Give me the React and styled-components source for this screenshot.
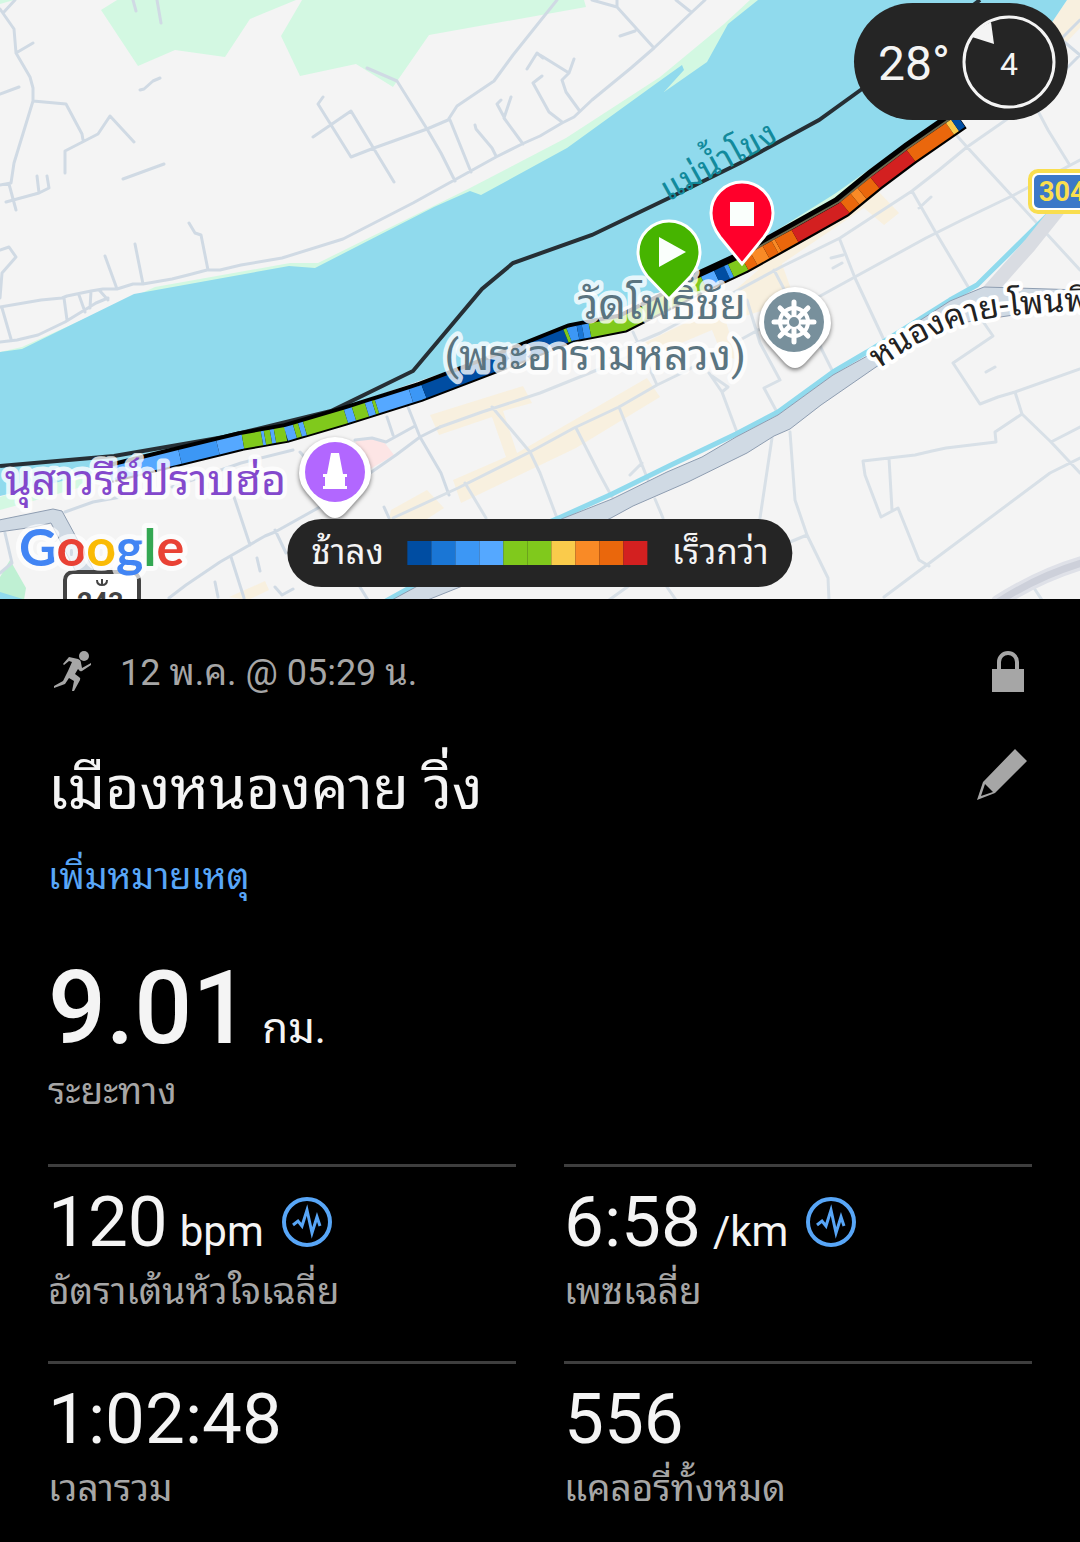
import styled, { createGlobalStyle } from "styled-components";

function App() {
    return (
        <>
            <GlobalStyle />
            <Page>
                <MapSection>
                    <RouteMap />
                    <Weather>
                        <Temperature>28°</Temperature>
                        <Wind>
                            <svg viewBox="0 0 94 94" aria-hidden="true">
                                <circle cx="47" cy="47" r="45" fill="none" stroke="#f4f4f4" strokeWidth="3" />
                                <path d="M10 22 Q17 12 29 7 L32 29Z" fill="#f4f4f4" />
                            </svg>
                            <WindSpeed>4</WindSpeed>
                        </Wind>
                    </Weather>
                    <Legend>
                        <span>ช้าลง</span>
                        <Scale>
                            {scaleColors.map((color, i) => (
                                <ScaleStep key={i} $color={color} />
                            ))}
                        </Scale>
                        <span>เร็วกว่า</span>
                    </Legend>
                </MapSection>

                <Details>
                    <DateRow>
                        <RunIcon />
                        <DateText>12 พ.ค. @ 05:29 น.</DateText>
                        <IconButton aria-label="ความเป็นส่วนตัว">
                            <LockIcon />
                        </IconButton>
                    </DateRow>
                    <TitleRow>
                        <Title>เมืองหนองคาย วิ่ง</Title>
                        <IconButton aria-label="แก้ไข">
                            <PencilIcon />
                        </IconButton>
                    </TitleRow>
                    <NoteLink href="#note">เพิ่มหมายเหตุ</NoteLink>

                    <Distance>
                        <DistanceValue>9.01</DistanceValue>
                        <Unit>กม.</Unit>
                    </Distance>
                    <Label>ระยะทาง</Label>

                    <Stats>
                        {stats.map((stat) => (
                            <Stat key={stat.label}>
                                <StatLine>
                                    <StatValue>{stat.value}</StatValue>
                                    {stat.unit && <Unit>{stat.unit}</Unit>}
                                    {stat.chart && (
                                        <ChartButton aria-label={stat.label}>
                                            <PulseIcon />
                                        </ChartButton>
                                    )}
                                </StatLine>
                                <Label>{stat.label}</Label>
                            </Stat>
                        ))}
                    </Stats>
                </Details>
            </Page>
        </>
    );
}

export default App;

const stats = [
    { value: "120", unit: "bpm", label: "อัตราเต้นหัวใจเฉลี่ย", chart: true },
    { value: "6:58", unit: "/km", label: "เพซเฉลี่ย", chart: true },
    { value: "1:02:48", label: "เวลารวม" },
    { value: "556", label: "แคลอรี่ทั้งหมด" },
];

const navy = "#004da2";
const blue = "#1a76d5";
const azure = "#3c97f5";
const sky = "#55a8ff";
const green = "#80c91c";
const yellow = "#facb4b";
const amber = "#f98a26";
const orange = "#ea670c";
const red = "#d32020";

const scaleColors = [navy, blue, azure, sky, green, green, yellow, amber, orange, red];

// centre line of the run
const track = [
    [110, 474], [155, 463], [241, 442], [286, 434], [344, 417], [420, 393], [496, 364], [571, 334],
    [623, 324], [698, 286], [743, 265], [795, 236], [843, 209], [876, 182], [912, 155], [961, 121],
];

// where each pace band ends, going east from x = 110
const paceBands = [
    [180, sky], [218, azure], [243, sky], [262, green], [265, sky], [271, green], [275, sky], [286, green],
    [295, sky], [300, green], [305, sky], [346, green], [354, sky], [367, green], [374, sky], [377, green],
    [411, sky], [424, azure], [566, navy], [569, green], [578, azure], [583, blue], [590, azure],
    [704, green], [717, sky], [727, navy], [731, azure], [745, green], [754, orange], [766, amber],
    [775, orange], [778, amber], [795, orange], [845, red], [855, orange], [862, amber], [875, orange],
    [911, red], [950, orange], [955, yellow], [961, navy],
];

function trackY(x) {
    const i = Math.max(1, track.findIndex((p) => p[0] >= x));
    const [x1, y1] = track[i - 1];
    const [x2, y2] = track[i];
    return y1 + ((x - x1) / (x2 - x1)) * (y2 - y1);
}

function bandPoints(from, to) {
    const inner = track.filter((p) => p[0] > from && p[0] < to);
    return [[from, trackY(from)], ...inner, [to, trackY(to)]].join(" ");
}

const trackBands = paceBands.map(([end, color], i) => {
    const start = i ? paceBands[i - 1][0] : 110;
    return { color, points: bandPoints(start, end) };
});

const roads = `
M15 0 L3 13 M0 9 L14 29 L16 53 L30 77 L33 88 V101 L14 163 L11 183 L0 185 M16 53 L33 43 M0 94 L19 87
M33 101 L66 104 L82 134 L83 140 M65 173 V151 L98 134 L110 116 L134 142 M140 90 L144 89 L153 81 L160 78
M123 179 L164 164 M9 184 L16 210 M6 202 L39 193 L49 188 L47 176 M37 176 L39 193 M133 0 L136 11 M157 0 L161 23
M0 250 L9 247 L16 257 L2 273 L0 298 M105 256 L117 289 M135 244 L143 284 M189 223 L195 233 L201 235 L208 270
M0 342 L17 340 L38 335 L65 322 L96 303 L108 298 M0 307 L41 300 L62 298 L67 296 L91 291 L103 289 H117 L133 284
H143 L172 279 L188 275 L207 270 H220 L241 265 L282 258 L343 239 L413 203 L496 157 L522 144 L540 136 L562 123
L574 117 L592 100 L631 68 L654 48 L691 13 L705 0 M2 308 L11 339 M64 298 L67 320 M79 295 L85 312 M91 291 L90 308
M100 291 L108 300 M323 97 L318 104 L351 157 L374 148 L427 129 L448 120 L457 106 L494 81 L513 55 L557 0
M313 137 L351 111 L394 182 M367 68 L397 81 L427 129 L441 153 L455 181 M450 120 L471 172
M475 125 L476 129 L492 148 L496 156 M511 97 L504 118 L523 144 M501 100 L497 104 L504 117 M527 69 L537 53 L543 58
M542 76 L533 83 L549 112 L562 122 M540 55 L569 73 L574 59 M569 73 L562 80 L566 92 L579 110
M592 0 L617 7 L654 48 M617 0 V7 M620 36 L635 31 M676 0 L691 12
M5 533 L12 563 L0 573 M65 512 L93 502 L121 497 M172 487 L241 463 L293 450 M234 497 L250 545
M169 598 L186 585 L220 562 L265 536 L275 532 L327 503 L396 455 L420 437 L440 427 M231 557 L244 598
M275 530 L286 553 M257 558 L260 571 M215 582 L218 597 M275 587 L282 595 L293 589 M384 507 L389 518
M408 407 L420 437 L441 473 L449 495 M387 417 L393 435 M355 440 L372 438 L386 442 L415 426 M300 452 L312 465
M1080 20 L1030 70 M1062 40 L1080 55 L1060 75 M360 587 L368 600`;

const paleRoads = `
M440 427 L482 412 L540 393 L602 368 L650 347 M492 407 L530 452 L540 473 L557 518 M465 483 L486 518 M393 518 L458 488 L530 452 L574 428
L619 407 L657 385 L688 370 L712 355 M576 428 L599 473 L612 497 M619 407 L648 480 M642 463 L630 475 M633 332 L657 385
M620 350 L660 333 L720 300 L781 267 L840 238 L912 191 L939 170 L967 147 L1003 122 L1020 110
M1039 113 L1048 130 L1069 164 M950 128 L967 147 L1012 196 L1080 270 M1080 160 L1012 196 L964 219 L926 238 L853 278 L740 340
M912 191 L936 233 L970 290 M840 240 L855 278 L884 340 M919 208 L931 197 M831 258 L843 255 M833 268 L842 263
M774 270 L795 310 M747 300 L760 343 L780 380 L764 388 L778 414 M709 373 L722 392 L738 435 M722 392 L728 387 L712 376
M816 335 L822 350 L834 374 M984 323 L993 336 L953 363 L980 404 L998 397 L1015 392 L1080 369
M1015 392 L1022 414 L1051 442 L1080 473 M1022 414 L995 432 L996 442 L946 448 L932 451 L915 455 L863 461 L865 475 L881 517
L898 508 L919 560 L929 566 M889 458 L892 510 M1051 442 L1080 427 M1080 458 L1050 473 L884 597 M986 372 L995 367
M790 432 L795 500 L807 535 L828 578 L829 600 M807 535 L790 542 M772 438 L760 518 M655 499 L663 518
M667 587 L676 600 M609 600 L630 585 M1032 585 L1042 600`;

function RouteMap() {
    return (
        <MapDrawing viewBox="0 0 1080 599" role="img" aria-label="แผนที่เส้นทาง">
            <rect width="1080" height="599" fill="#f4f4f4" />
            <g fill="#d3f8e2">
                <path d="M101 10 L117 0 H296 L250 19 L225 57 L175 50 L138 66Z" />
                <path d="M302 0 L281 36 L300 76 L356 64 L393 87 L429 35 L586 7 L584 0Z" />
                <path d="M0 0 H14 L0 4Z" />
                <path d="M0 352 L22 347 L155 287 L290 263 H318 L470 188 L566 138 L660 77 L724 24 L750 0 H770 V200 L0 480Z" />
                <path d="M700 276 L830 190 L946 118 L960 122 L800 230Z" />
                <path d="M0 497 L40 484 L130 473 L40 499 L0 510Z" />
            </g>
            <path d="M0 577 L10 560 L26 588 L24 600 H0Z" fill="#bff0d3" />
            <path d="M0 592 L26 600 H0Z" fill="#90daed" />
            <g fill="#f8f0df">
                <path d="M430 415 L523 386 L532 403 L503 411 L517 453 L647 378 L660 397 L576 448 L461 503 L453 480 L506 457 L492 417 L439 435Z" />
                <path d="M391 510 L427 490 L444 508 L427 519 H389Z M229 597 L265 581 L269 590 L248 600Z" />
                <path d="M640 345 L712 310 L778 253 L795 300 L780 305 L726 322 L738 360 L722 355 L712 330 L660 352Z" />
                <path d="M700 283 L800 226 L912 146 L857 203 L877 190 L899 213 L884 225 L864 208 L780 265Z" />
                <path d="M1067 0 H1080 V28 L1040 70 H1020Z" />
            </g>
            <path d="M355 440 L372 438 L384 442 L394 455 L365 472Z" fill="#fde5e5" />
            <path
                d="M0 352 L22 349 L134 294 L289 266 L315 268 L434 207 L470 191 L481 195 L567 148 L661 80 L682 65 L684 70 L664 92 L707 62 L728 24 L758 0 H1067 L1020 70 L884 159 L836 193 L774 232 L705 273 L570 330 L425 379 L330 412 L230 440 L150 458 L100 472 L0 496Z"
                fill="#90daed"
            />
            <g fill="none" strokeLinejoin="round" strokeLinecap="round">
                <path d={roads} stroke="#d0dae4" strokeWidth="3" />
                <path d={paleRoads} stroke="#d8e0e7" strokeWidth="3" />
                <path d="M1052 211 L977 285 L950 300 L867 352 L833 372 L778 412 L736 434 L671 465 L612 494 L561 517 L460 560 L386 601" stroke="#90daed" strokeWidth="5" />
                <path d="M1062 205 L1030 245 L990 290" stroke="#d9dce2" strokeWidth="14" />
                <path d="M1085 562 Q1040 575 998 602" stroke="#dfe1e8" strokeWidth="14" />
                <path d="M1085 562 Q1040 575 998 602" stroke="#cdd0da" strokeWidth="7" />
            </g>
            <g fill="#d0dae4" stroke="#8e9db1" strokeWidth="1">
                <path d="M1081 290 L984 287 L950 301 L905 330 L869 355 L833 375 L778 415 L736 437 L702 457 L667 472 L612 499 L564 518 L460 563 L390 601 H425 L460 587 L611 518 L633 506 L688 482 L747 453 L774 436 L790 429 L821 405 L876 367 L940 326 L1081 305Z" />
                <path d="M-1 520 L53 509 L62 511 L95 572 H76 L51 523 L34 527 L-1 532Z" />
            </g>
            <path
                d="M0 466 L114 456 L224 437 L331 411 L413 371 L482 289 L513 263 L592 235 L669 198 L740 163 L819 120 L862 89 L980 0"
                fill="none"
                stroke="#262f35"
                strokeWidth="4"
            />

            {/* outbound leg shows only as a dark edge above the return leg */}
            <g fill="none" strokeLinejoin="round">
                <polyline points={track.map(([x, y]) => [x, y - 1]).join(" ")} stroke="#000" strokeWidth="20" />
                <polyline points={track.slice(9).map(([x, y]) => [x - 3, y - 4]).join(" ")} stroke="#000" strokeWidth="18" />
                <polyline points={track.slice(10).map(([x, y]) => [x - 4, y - 7]).join(" ")} stroke="#6b6a50" strokeWidth="2" />
                {trackBands.map((band) => (
                    <polyline key={band.points} points={band.points} stroke={band.color} strokeWidth="14" />
                ))}
            </g>

            <g stroke="#fff" strokeOpacity="0.8" strokeWidth="9" strokeLinejoin="round" paintOrder="stroke">
                <MapText x="746" y="319" textAnchor="end" fill="#5a7480">วัดโพธิ์ชัย</MapText>
                <MapText x="746" y="370" textAnchor="end" fill="#5a7480">(พระอารามหลวง)</MapText>
                <MapText x="286" y="495" textAnchor="end" fill="#8348cc">นุสาวรีย์ปราบฮ่อ</MapText>
            </g>
            <path id="river" d="M668 202 L800 129" fill="none" />
            <MapText $size={34} fill="#128a9c">
                <textPath href="#river">แม่น้ำโขง</textPath>
            </MapText>
            <path id="road" d="M879 369 Q940 324 1000 317 T1120 311" fill="none" />
            <MapText $size={33} fill="#222" stroke="#fff" strokeWidth="8" strokeLinejoin="round" paintOrder="stroke">
                <textPath href="#road">หนองคาย-โพนพิ</textPath>
            </MapText>

            <Shadowed>
                <path d="M795 287 a36 36 0 0 0 -36 36 q0 11 8 20 l18 20 q10 10 20 0 l18 -20 q8 -9 8 -20 a36 36 0 0 0 -36 -36Z" fill="#fff" />
                <path d="M335 437 a36 36 0 0 0 -36 36 q0 11 8 20 l18 20 q10 10 20 0 l18 -20 q8 -9 8 -20 a36 36 0 0 0 -36 -36Z" fill="#fff" />
            </Shadowed>
            <circle cx="794" cy="322" r="30" fill="#78909c" />
            <g fill="none" stroke="#fff" strokeWidth="4" strokeLinecap="round">
                <circle cx="794" cy="322" r="14" />
                <path d="M794 302 V342 M774 322 H814 M780 308 L808 336 M808 308 L780 336" strokeWidth="5" />
            </g>
            <circle cx="794" cy="322" r="6" fill="#78909c" stroke="#fff" strokeWidth="2" />
            <circle cx="335" cy="472" r="30" fill="#b267ff" />
            <path d="M331 453 h8 l4 21 h4 v3 h-2 v9 h2 v3 h-24 v-3 h2 v-9 h-2 v-3 h4Z" fill="#fff" />

            <g stroke="#fff" strokeWidth="3">
                <path d="M742 182 a31 31 0 0 1 31 31 q0 12 -9 24 L742 264 L720 237 q-9 -12 -9 -24 a31 31 0 0 1 31 -31Z" fill="#ff002b" />
                <path d="M669 221 a31 31 0 0 1 31 31 q0 12 -9 24 L669 299 L647 276 q-9 -12 -9 -24 a31 31 0 0 1 31 -31Z" fill="#46b400" />
            </g>
            <rect x="730" y="202" width="24" height="24" fill="#fafffc" />
            <path d="M659 237 L686 252 L659 267Z" fill="#fafffc" />

            <rect x="1030" y="171" width="80" height="41" rx="8" fill="#fff" stroke="#f9de4f" strokeWidth="4" />
            <rect x="1034" y="175" width="80" height="33" rx="5" fill="#3c78c8" />
            <MapText x="1039" y="201" $size={27} $bold fill="#f9de4f">304</MapText>

            <rect x="65" y="572" width="74" height="60" rx="8" fill="#fff" stroke="#444" strokeWidth="4" />
            <path d="M97 580 q0 5 5 5 q5 0 5 -5 M102 579 v5" fill="none" stroke="#444" strokeWidth="2" />
            <MapText x="77" y="612" $size={27} $bold fill="#444">243</MapText>

            <GoogleMark x="19" y="566">
                <tspan fill="#4285f4">G</tspan>
                <tspan fill="#e94235">o</tspan>
                <tspan fill="#fabb05">o</tspan>
                <tspan fill="#4285f4">g</tspan>
                <tspan fill="#34a853">l</tspan>
                <tspan fill="#e94235">e</tspan>
            </GoogleMark>
        </MapDrawing>
    );
}

function RunIcon() {
    return (
        <svg width="40" height="42" viewBox="0 0 40 42" fill="#a6a6a6" aria-hidden="true">
            <circle cx="32" cy="6" r="5" />
            <path d="M11 14 L17 7 L26 9 Q29 10 29 13 L30 18 L39 13 L39 15 L30 21 Q28 22 27 20 L26 19 L23 24 L27 27 Q29 28 28 30 L22 41 L20 41 L22 31 L17 28 L13 34 L2 38 L2 36 L11 31 L14 25 Q15 23 16 21 L20 12 L17 11 L12 15Z" />
        </svg>
    );
}

function LockIcon() {
    return (
        <svg width="32" height="41" viewBox="0 0 32 41" aria-hidden="true">
            <path d="M7 20 V11 a9 9 0 0 1 18 0 V20" fill="none" stroke="#a6a6a6" strokeWidth="4" />
            <rect y="18" width="32" height="23" fill="#a6a6a6" />
        </svg>
    );
}

function PencilIcon() {
    return (
        <svg width="50" height="51" viewBox="0 0 50 51" fill="#a6a6a6" aria-hidden="true">
            <path fillRule="evenodd" d="M38 0 L50 12 L18 44 L0 51 L6 33Z M8 35 L4 47 L16 43Z" />
        </svg>
    );
}

function PulseIcon() {
    return (
        <svg width="50" height="50" viewBox="0 0 50 50" fill="none" stroke="#58a6f7" strokeWidth="3" aria-hidden="true">
            <circle cx="25" cy="25" r="23" strokeWidth="4" />
            <path d="M11 28 L16 24 L20 29 L25 13 L30 36 L35 20 L38 29" />
        </svg>
    );
}

const GlobalStyle = createGlobalStyle`
    * {
        box-sizing: border-box;
    }

    body {
        margin: 0;
        background-color: #000;
        color: #f4f4f4;
        font-family: Roboto, "Noto Sans Thai Looped", "Noto Sans", sans-serif;
    }
`;

const Page = styled.main`
    overflow: hidden;
`;

const MapSection = styled.section`
    position: relative;
`;

const MapDrawing = styled.svg`
    display: block;
    width: 100%;
    height: auto;
`;

const MapText = styled.text`
    font-size: ${(props) => props.$size || 43}px;
    font-weight: ${(props) => (props.$bold ? 700 : 400)};
`;

const GoogleMark = styled.text`
    font-family: Lato, sans-serif;
    font-size: 52px;
    font-weight: 700;
    stroke: #fff;
    stroke-opacity: 0.7;
    stroke-width: 10px;
    stroke-linejoin: round;
    paint-order: stroke;
`;

const Shadowed = styled.g`
    filter: drop-shadow(0 2px 2px rgba(0, 0, 0, 0.5));
`;

const Weather = styled.div`
    position: absolute;
    top: 3px;
    right: 12px;
    display: flex;
    align-items: center;
    gap: 12px;
    height: 117px;
    padding: 0 12px 0 24px;
    border-radius: 60px;
    background-color: #252525;
`;

const Temperature = styled.span`
    padding-top: 4px;
    font-size: 48px;
    line-height: 56px;
`;

const Wind = styled.div`
    display: grid;
    place-items: center;
    width: 94px;
    height: 94px;

    > * {
        grid-area: 1 / 1;
    }
`;

const WindSpeed = styled.span`
    padding-top: 4px;
    font-size: 32px;
    line-height: 40px;
`;

const Legend = styled.div`
    position: absolute;
    left: 50%;
    bottom: 12px;
    transform: translateX(-50%);
    display: flex;
    align-items: center;
    gap: 24px;
    height: 68px;
    padding: 0 24px;
    border-radius: 34px;
    background-color: #252525;
    font-size: 35px;
    line-height: 40px;
    white-space: nowrap;
`;

const Scale = styled.div`
    display: flex;
`;

const ScaleStep = styled.span`
    width: 24px;
    height: 24px;
    background-color: ${(props) => props.$color};
`;

const Details = styled.section`
    padding: 48px 48px 0;
`;

const DateRow = styled.div`
    display: flex;
    align-items: center;
    gap: 28px;
    height: 48px;
    padding: 0 8px 0 4px;
`;

const DateText = styled.time`
    flex: 1;
    padding-top: 4px;
    font-size: 36px;
    line-height: 44px;
    color: #a6a6a6;
`;

const IconButton = styled.button`
    display: flex;
    padding: 0;
    border: none;
    background: none;
    cursor: pointer;
`;

const TitleRow = styled.div`
    display: flex;
    align-items: flex-start;
    justify-content: space-between;
    height: 96px;
    margin-top: 54px;
    padding-right: 5px;
`;

const Title = styled.h1`
    margin: 0;
    font-size: 59px;
    line-height: 80px;
    font-weight: 400;
`;

const NoteLink = styled.a`
    display: block;
    font-size: 36px;
    line-height: 64px;
    color: #58a6f7;
    text-decoration: none;
`;

const Distance = styled.div`
    display: flex;
    align-items: baseline;
    gap: 12px;
    margin-top: 39px;
`;

const DistanceValue = styled.strong`
    font-size: 102px;
    line-height: 120px;
    font-weight: 500;
`;

const Unit = styled.span`
    font-size: 42px;
    line-height: 48px;
`;

const Label = styled.div`
    font-size: 37px;
    line-height: 48px;
    color: #a6a6a6;
`;

const Stats = styled.div`
    display: grid;
    grid-template-columns: 1fr 1fr;
    column-gap: 48px;
    margin-top: 48px;
`;

const Stat = styled.div`
    height: 197px;
    padding-top: 12px;
    border-top: 3px solid #3e3e3e;
`;

const StatLine = styled.div`
    display: flex;
    align-items: baseline;
    gap: 12px;
    margin-bottom: 3px;
`;

const StatValue = styled.span`
    font-size: 71px;
    line-height: 86px;
`;

const ChartButton = styled(IconButton)`
    align-self: center;
    margin-left: 6px;
`;
